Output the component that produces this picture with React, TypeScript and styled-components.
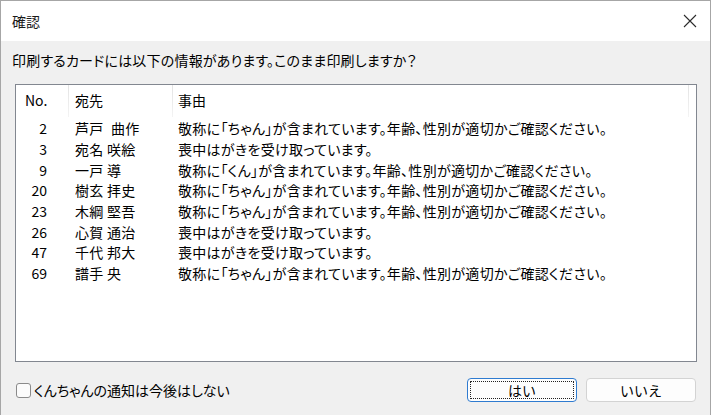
import styled, { createGlobalStyle } from 'styled-components';

const GlobalStyle = createGlobalStyle`
  html, body {
    margin: 0;
    padding: 0;
    background: #ffffff;
  }
  body {
    font-family: 'Noto Sans CJK JP', 'Noto Sans', sans-serif;
    font-feature-settings: 'palt';
    color: #000000;
  }
`;

const StWindow = styled.div`
  width: 711px;
  height: 415px;
  box-sizing: border-box;
  border: 1px solid #a6a6a6;
  border-bottom: none;
  display: flex;
  flex-direction: column;
  background: #f0f0f0;
`;

const StTitleBar = styled.div`
  height: 40px;
  flex: none;
  display: flex;
  align-items: center;
  justify-content: space-between;
  padding: 0 12px 0 11px;
  background: #ffffff;
  font-size: 14px;
  color: #1a1a1a;
`;

const StClose = styled.button`
  width: 16px;
  height: 16px;
  padding: 0;
  border: none;
  background: transparent;
  display: flex;
  align-items: center;
  justify-content: center;
`;

const StBody = styled.div`
  flex: 1;
  display: flex;
  flex-direction: column;
  padding: 0 13px 0 14px;
`;

const StMessage = styled.p`
  margin: 0 0 0 -3px;
  height: 43px;
  box-sizing: border-box;
  padding-bottom: 5px;
  display: flex;
  align-items: center;
  font-size: 14px;
  letter-spacing: 0.2px;
`;

const StListBox = styled.div`
  height: 278px;
  box-sizing: border-box;
  border: 1px solid #828790;
  background: #ffffff;
  display: flex;
  flex-direction: column;
  font-size: 14px;
`;

const StGridRow = styled.div<{ $header?: boolean }>`
  display: grid;
  grid-template-columns: 53px 104px 516px 1fr;
  height: ${(p) => (p.$header ? '32px' : '20.7px')};
  align-items: center;
  flex: none;
`;

const StHeadCell = styled.div<{ $pad: number }>`
  height: 100%;
  display: flex;
  align-items: center;
  padding-left: ${(p) => p.$pad}px;
  padding-bottom: 2px;
  box-sizing: border-box;
  border-right: 1px solid #e6e6e6;
  border-image: linear-gradient(#e3e3e3, #f4f4f4) 1;
`;

const StHeadFill = styled.div``;

const StNo = styled.div`
  text-align: right;
  padding-right: 22px;
`;

const StCell = styled.div<{ $pad: number }>`
  padding-left: ${(p) => p.$pad}px;
  white-space: nowrap;
  letter-spacing: 0.3px;
`;

const StSpacer = styled.div`
  height: 1px;
`;

const StFooter = styled.div`
  flex: 1;
  display: flex;
  align-items: center;
  justify-content: space-between;
  padding-top: 3px;
`;

const StCheckLabel = styled.label`
  display: flex;
  align-items: center;
  gap: 3px;
  font-size: 14px;
  margin-left: 1px;
`;

const StCheckBox = styled.span`
  width: 13px;
  height: 13px;
  border: 1px solid #8a8a8a;
  border-radius: 3px;
  background: #fbfbfb;
`;

const StButtons = styled.div`
  display: flex;
  gap: 9px;
  margin-right: 1px;
`;

const StButton = styled.button<{ $default?: boolean }>`
  position: relative;
  width: 110px;
  height: 24px;
  box-sizing: border-box;
  border: 1px solid ${(p) => (p.$default ? '#2f7bd0' : '#d3d3d3')};
  border-radius: 4px;
  background: #fdfdfd;
  font-family: inherit;
  font-size: 14px;
  color: #000000;
  padding: 0;
  &::after {
    content: '';
    display: ${(p) => (p.$default ? 'block' : 'none')};
    position: absolute;
    inset: 2px;
    border: 1px dotted #222222;
    border-radius: 1px;
  }
`;

const rows = [
  { no: 2, name: '芦戸\u2002曲作', reason: '敬称に「ちゃん」が含まれています。年齢、性別が適切かご確認ください。' },
  { no: 3, name: '宛名 咲絵', reason: '喪中はがきを受け取っています。' },
  { no: 9, name: '一戸 導', reason: '敬称に「くん」が含まれています。年齢、性別が適切かご確認ください。' },
  { no: 20, name: '樹玄 拝史', reason: '敬称に「ちゃん」が含まれています。年齢、性別が適切かご確認ください。' },
  { no: 23, name: '木綱 堅吾', reason: '敬称に「ちゃん」が含まれています。年齢、性別が適切かご確認ください。' },
  { no: 26, name: '心賀 通治', reason: '喪中はがきを受け取っています。' },
  { no: 47, name: '千代 邦大', reason: '喪中はがきを受け取っています。' },
  { no: 69, name: '譜手 央', reason: '敬称に「ちゃん」が含まれています。年齢、性別が適切かご確認ください。' },
];

function App() {
  return (
    <>
      <GlobalStyle />
      <StWindow>
        <StTitleBar>
          <span>確認</span>
          <StClose aria-label="閉じる">
            <svg width="14" height="14" viewBox="0 0 14 14">
              <path d="M1 1 L13 13 M13 1 L1 13" stroke="#2b2b2b" strokeWidth="1.1" fill="none" />
            </svg>
          </StClose>
        </StTitleBar>
        <StBody>
          <StMessage>印刷するカードには以下の情報があります。このまま印刷しますか？</StMessage>
          <StListBox>
            <StGridRow $header>
              <StHeadCell $pad={9}>No.</StHeadCell>
              <StHeadCell $pad={6}>宛先</StHeadCell>
              <StHeadCell $pad={5}>事由</StHeadCell>
              <StHeadFill />
            </StGridRow>
            <StSpacer />
            {rows.map((r) => (
              <StGridRow key={r.no}>
                <StNo>{r.no}</StNo>
                <StCell $pad={6}>{r.name}</StCell>
                <StCell $pad={5}>{r.reason}</StCell>
              </StGridRow>
            ))}
          </StListBox>
          <StFooter>
            <StCheckLabel>
              <StCheckBox />
              くんちゃんの通知は今後はしない
            </StCheckLabel>
            <StButtons>
              <StButton $default>はい</StButton>
              <StButton>いいえ</StButton>
            </StButtons>
          </StFooter>
        </StBody>
      </StWindow>
    </>
  );
}

export default App;
